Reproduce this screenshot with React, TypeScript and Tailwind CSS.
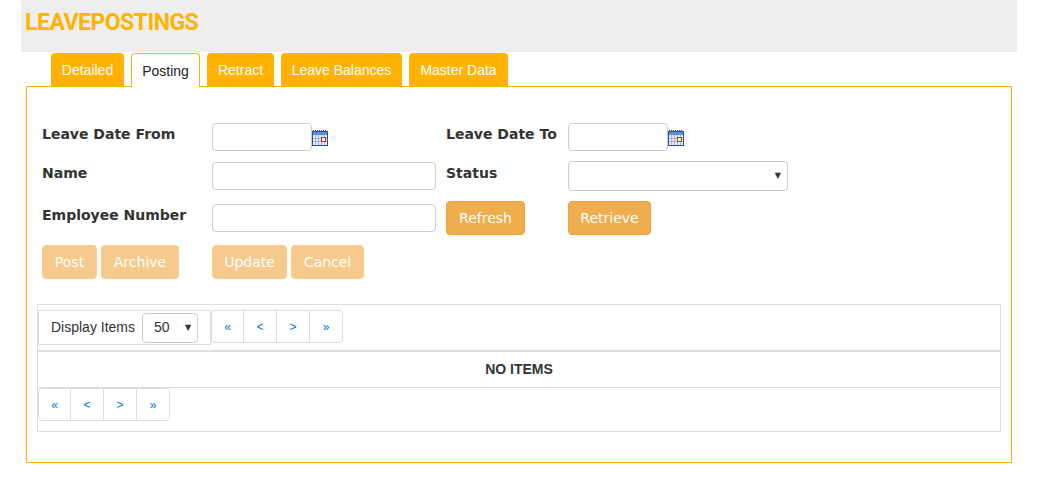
const tabs = [
  { label: "Detailed", width: "w-[73px]" },
  { label: "Posting", width: "w-[69px]" },
  { label: "Retract", width: "w-[67px]" },
  { label: "Leave Balances", width: "w-[121px]" },
  { label: "Master Data", width: "w-[99px]" },
];
const pages = [
  { label: "«", width: "w-[31px]" },
  { label: "<", width: "w-[33px]" },
  { label: ">", width: "w-[33px]" },
  { label: "»", width: "flex-1" },
];

function CalendarIcon() {
  return (
    <svg width="16" height="16" viewBox="0 0 16 16" className="mt-[7px] shrink-0">
      <rect x="0.5" y="1.500" width="15" height="14" fill="#e4ecfa" stroke="#33507f" />
      <path d="M1 0.500h14" stroke="#444" strokeDasharray="1 1" />
      <rect x="1" y="2" width="14" height="3" fill="#5a8ee0" />
      <path d="M1 8.500h14M1 11.500h14M3.500 5v10M6.500 5v10M9.500 5v10M12.500 5v10" stroke="#9db4dc" strokeWidth="1" />
      <rect x="9.500" y="7.500" width="4" height="4" fill="#fff" stroke="#ee2211" />
    </svg>
  );
}

function DateInput() {
  return (
    <div className="flex items-start">
      <input className="h-[28px] w-[100px] rounded border border-[#ccc] bg-white" />
      <CalendarIcon />
    </div>
  );
}

function FormButton({ label, faded, className }: { label: string; faded?: boolean; className: string }) {
  return (
    <button
      className={`h-[34px] rounded border text-center text-[14px] text-white ${faded ? "border-[#f6cb8e] bg-[#f5ca8c]" : "border-[#eea236] bg-[#f0ad4e]"} ${className}`}
    >
      {label}
    </button>
  );
}

function Pager() {
  return (
    <div className="flex h-[33px] w-[132px] rounded border border-[#ddd] bg-white font-['Liberation_Sans',sans-serif]">
      {pages.map((p, i) => (
        <div
          key={p.label}
          className={`flex items-center justify-center text-[12px] text-[#0275d8] ${p.width} ${i > 0 ? "border-l border-[#ddd]" : ""}`}
        >
          {p.label}
        </div>
      ))}
    </div>
  );
}

export default function App() {
  return (
    <div className="h-[485px] w-[1049px] overflow-hidden bg-white font-['DejaVu_Sans',sans-serif] text-[#333]">
      <div className="ml-[21px] flex h-[52px] w-[996px] items-start bg-[#eee] pl-[4px] pt-[9px]">
        <h1 className="font-['Roboto',sans-serif] text-[23px] font-bold leading-[28px] tracking-[-0.5px] text-[#ffb300]">
          LEAVEPOSTINGS
        </h1>
      </div>

      <div className="ml-[26px] w-[986px]">
        {/* Tabs */}
        <div className="relative z-10 mt-px flex h-[34px] gap-[7px] pl-[25px] font-['Liberation_Sans',sans-serif] text-[14px]">
          {tabs.map((t) => (
            <div
              key={t.label}
              className={
                t.label === "Posting"
                  ? `flex h-[34px] items-center justify-center rounded-t border border-b-0 border-[#ffb300] bg-white pt-px text-[#222] ${t.width}`
                  : `flex h-[33px] items-center justify-center rounded-t bg-[#ffb300] pt-px text-white ${t.width}`
              }
            >
              {t.label}
            </div>
          ))}
        </div>

        {/* Panel */}
        <div className="-mt-px h-[377px] border border-[#ffb300] pl-[10px] pr-[10px] pt-[36px]">
          <div className="grid grid-cols-[170px_234px_122px_1fr] pl-[5px] text-[14px]">
            <div className="h-[38px] pt-[3px] font-bold leading-[17px]">Leave Date From</div>
            <DateInput />
            <div className="pt-[3px] font-bold leading-[17px]">Leave Date To</div>
            <DateInput />

            <div className="h-[40px] pt-[4px] font-bold leading-[17px]">Name</div>
            <input className="mt-px h-[28px] w-[224px] rounded border border-[#ccc] bg-white" />
            <div className="pt-[4px] font-bold leading-[17px]">Status</div>
            <div className="relative h-[30px] w-[220px] rounded border border-[#ccc] bg-white">
              <span className="absolute right-[6px] top-[9px] text-[8px] leading-[10px] text-[#333]">▼</span>
            </div>

            <div className="h-[44px] pt-[6px] font-bold leading-[17px]">Employee Number</div>
            <input className="mt-[3px] h-[28px] w-[224px] rounded border border-[#ccc] bg-white" />
            <div>
              <FormButton label="Refresh" className="w-[79px]" />
            </div>
            <div>
              <FormButton label="Retrieve" className="w-[83px]" />
            </div>

            <div className="flex gap-[4px]">
              <FormButton label="Post" faded className="w-[55px]" />
              <FormButton label="Archive" faded className="w-[78px]" />
            </div>
            <div className="flex gap-[4px]">
              <FormButton label="Update" faded className="w-[75px]" />
              <FormButton label="Cancel" faded className="w-[73px]" />
            </div>
          </div>

          {/* Grid */}
          <div className="mt-[25px] h-[128px] w-[964px] border border-[#ddd] font-['Liberation_Sans',sans-serif]">
            <div className="h-[45px] pt-[5px]">
              <div className="flex items-start">
                <div className="flex h-[35px] w-[173px] items-center border border-[#ddd] pl-[12px] text-[14px]">
                  Display Items
                  <div className="relative ml-[7px] flex h-[30px] w-[56px] items-center rounded border border-[#ccc] pl-[11px] text-[#333]">
                    50
                    <span className="absolute right-[6px] top-[9px] font-['DejaVu_Sans',sans-serif] text-[8px] leading-[10px]">▼</span>
                  </div>
                </div>
                <Pager />
              </div>
            </div>
            <div className="flex h-[38px] items-center justify-center border-t-2 border-b border-[#ddd] pb-px text-[14px] font-bold text-[#333]">
              NO ITEMS
            </div>
            <div>
              <Pager />
            </div>
          </div>
        </div>
      </div>
    </div>
  );
}
